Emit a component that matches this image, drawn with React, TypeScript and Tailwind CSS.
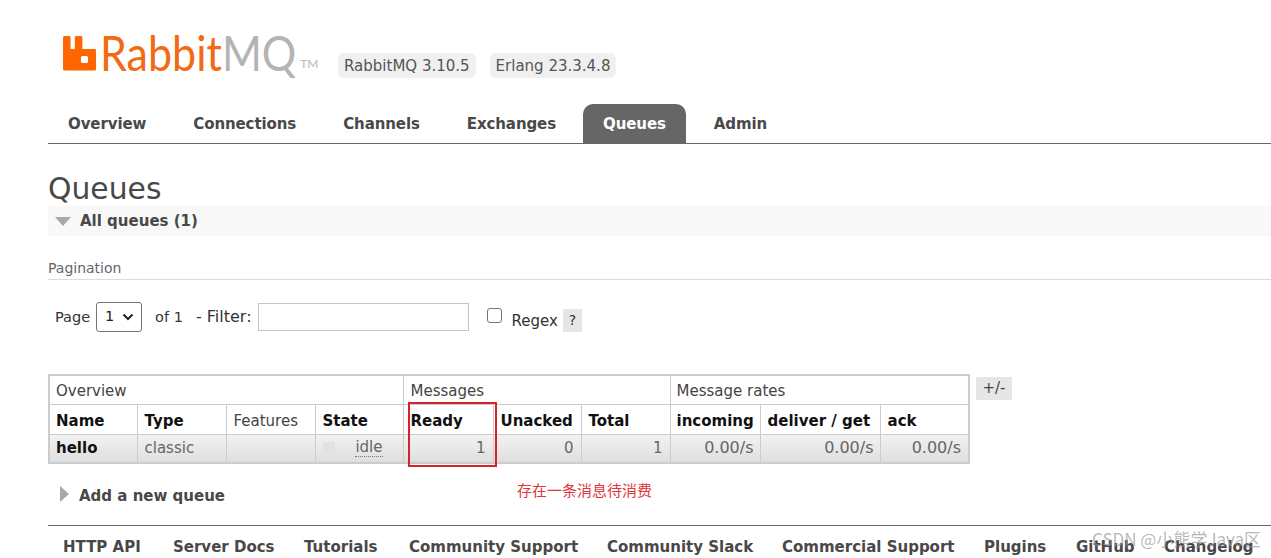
const font = "[font-family:'DejaVu_Sans',Verdana,sans-serif]";

const nav = ["Overview", "Connections", "Channels", "Exchanges", "Queues", "Admin"];
const footer: [string, string][] = [
  ["HTTP API", "w-[110px]"],
  ["Server Docs", "w-[131px]"],
  ["Tutorials", "w-[105px]"],
  ["Community Support", "w-[198px]"],
  ["Community Slack", "w-[175px]"],
  ["Commercial Support", "w-[202px]"],
  ["Plugins", "w-[92px]"],
  ["GitHub", "w-[88px]"],
  ["Changelog", "w-auto"],
];

const headCols: [string, string, boolean][] = [
  ["Name", "w-[88px]", true],
  ["Type", "w-[89px]", true],
  ["Features", "w-[89px]", false],
  ["State", "w-[88px]", true],
  ["Ready", "w-[90px]", true],
  ["Unacked", "w-[88px]", true],
  ["Total", "w-[89px]", true],
  ["incoming", "w-[90px]", true],
  ["deliver / get", "w-[120px]", true],
  ["ack", "w-[89px]", true],
];

const cell = "border border-[#ccc] px-[7px] py-0 align-middle whitespace-nowrap";
const rowBg = "bg-gradient-to-b from-[#f3f3f3] to-[#dedede]";

export default function App() {
  return (
    <div className={`${font} relative h-[558px] w-[1271px] overflow-hidden bg-white pl-12 text-[#484848]`}>
      {/* Header */}
      <div className="flex h-[104px] items-start">
        <div className="ml-[15px] mt-[35px] flex h-[36px] w-[275px] shrink-0 items-center">
          <svg width="34" height="35" viewBox="0 0 36 35" preserveAspectRatio="none" className="shrink-0">
            <path
              d="M1.5 0H6.5A1.5 1.5 0 0 1 8 1.5V13H12.5V1.5A1.5 1.5 0 0 1 14 0H19A1.5 1.5 0 0 1 20.5 1.5V13H33.5A1.5 1.5 0 0 1 35 14.5V33A1.5 1.5 0 0 1 33.5 34.5H1.5A1.5 1.5 0 0 1 0 33V1.5A1.5 1.5 0 0 1 1.5 0ZM20.5 20A1.5 1.5 0 0 0 19 21.5V25.5A1.5 1.5 0 0 0 20.5 27H25A1.5 1.5 0 0 0 26.5 25.5V21.5A1.5 1.5 0 0 0 25 20Z"
              fill="#ff6600"
              fillRule="evenodd"
            />
          </svg>
          <span className="ml-[3px] origin-[50%_70%] scale-y-[1.14] whitespace-nowrap font-['Lato',sans-serif] text-[43px] leading-none font-normal text-[#f26a13]">
            Rabbit<span className="text-[#b4b4b4]">MQ</span>
          </span>
          <span className="mt-[22px] ml-[4px] font-['Lato',sans-serif] text-[12px] leading-none text-[#b8b8b8]">TM</span>
        </div>
        <div className="mt-[53px] flex gap-[14px] text-[15px] leading-[24px] text-[#555]">
          <span className="rounded-[6px] bg-[#f0f0f0] px-[6px] pt-[1px]">RabbitMQ 3.10.5</span>
          <span className="rounded-[6px] bg-[#f0f0f0] px-[6px] pt-[1px]">Erlang 23.3.4.8</span>
        </div>
      </div>

      {/* Tabs */}
      <div className="flex h-[40px] items-stretch border-b border-[#666] pl-[20px] text-[15px] font-bold tracking-[-0.1px]">
        {nav.map((n) =>
          n === "Queues" ? (
            <span key={n} className="mr-[28px] -ml-[20px] flex items-center rounded-t-[10px] bg-[#666] px-[20px] pt-[2px] text-white">
              {n}
            </span>
          ) : (
            <span key={n} className="mr-[47px] flex items-center pt-[2px] text-[#484848]">
              {n}
            </span>
          )
        )}
      </div>

      {/* Title */}
      <h1 className="mt-[27px] h-[35px] text-[29.8px] leading-[36px] font-normal text-[#484848]">Queues</h1>
      <div className="flex h-[30px] w-full items-center bg-[#f8f8f8]">
        <svg width="16" height="9" viewBox="0 0 16 9" className="ml-[7px]">
          <path d="M0 0H16L8 9Z" fill="#a8a8a8" />
        </svg>
        <span className="ml-[9px] text-[15px] font-bold text-[#484848]">All queues (1)</span>
      </div>

      {/* Pagination */}
      <div className="mt-[22px] h-[22px] border-b border-[#dcdcdc] text-[14px] leading-[20px] text-[#666]">Pagination</div>
      <div className="mt-[22px] flex h-[30px] items-center pl-[7px] text-[14.5px] text-[#333]">
        <span className="translate-y-[1px]">Page</span>
        <div className="ml-[6px] flex h-[30px] w-[46px] items-center justify-between rounded-[3px] border border-[#767676] pr-[7px] pl-[8px] text-[#222]">
          <span>1</span>
          <svg width="12" height="8" viewBox="0 0 12 8">
            <path d="M1.5 1.5L6 6L10.5 1.5" fill="none" stroke="#222" strokeWidth="2" />
          </svg>
        </div>
        <span className="ml-[13px] translate-y-[1px]">of 1</span>
        <span className="ml-[13px] text-[16px]">- Filter:</span>
        <div className="ml-[6px] h-[28px] w-[211px] border border-[#c4c4c4] bg-white" />
        <div className="ml-[18px] -mt-[4px] h-[15px] w-[15px] rounded-[3px] border border-[#767676] bg-white" />
        <span className="ml-[10px] translate-y-[4px] text-[15px]">Regex</span>
        <span className="ml-[5px] flex h-[23px] w-[19px] translate-y-[3px] items-center justify-center bg-[#e6e6e6] text-[14px]">?</span>
      </div>

      {/* Table */}
      <div className="mt-[42px] flex items-start">
        <table className="w-[921px] table-fixed border-collapse border-2 border-[#ccc] text-[15px]">
          <colgroup>
            {headCols.map(([n, w]) => (
              <col key={n} className={w} />
            ))}
          </colgroup>
          <tbody>
            <tr className="h-[29px] text-[#444]">
              <td colSpan={4} className={`${cell} pt-[2px] pl-[6px]`}>Overview</td>
              <td colSpan={3} className={`${cell} pt-[2px]`}>Messages</td>
              <td colSpan={3} className={`${cell} pt-[2px] pl-[6px]`}>Message rates</td>
            </tr>
            <tr className="h-[30px]">
              {headCols.map(([n, , b], i) => (
                <td key={n} className={`${cell} pt-[4px] ${i === 0 || i === 7 ? "pl-[6px]" : ""} ${b ? "font-bold text-[#111]" : "text-[#444]"}`}>
                  {n}
                </td>
              ))}
            </tr>
            <tr className={`h-[29px] ${rowBg} text-[#666]`}>
              <td className={`${cell} pl-[6px] font-bold text-[#111]`}>hello</td>
              <td className={cell}>classic</td>
              <td className={cell}></td>
              <td className={cell}>
                <div className="flex items-center justify-between pr-[13px]">
                  <span className="h-[12px] w-[12px] rounded-[2px] bg-[#e2e2e2]" />
                  <span className="border-b border-dotted border-[#777] leading-[17px]">idle</span>
                </div>
              </td>
              <td className={`${cell} text-right`}>1</td>
              <td className={`${cell} text-right`}>0</td>
              <td className={`${cell} text-right`}>1</td>
              <td className={`${cell} pr-[6px] text-right text-[16px]`}>0.00/s</td>
              <td className={`${cell} pr-[6px] text-right text-[16px]`}>0.00/s</td>
              <td className={`${cell} pr-[7px] text-right text-[16px]`}>0.00/s</td>
            </tr>
          </tbody>
        </table>
        <span className="ml-[6px] mt-[3px] flex h-[23px] w-[36px] items-center justify-center bg-[#e6e6e6] text-[15px] text-[#444]">+/-</span>
      </div>

      {/* Add a new queue */}
      <div className="mt-[21px] flex h-[22px] items-center">
        <svg width="9" height="16" viewBox="0 0 9 16" className="ml-[12px] -mt-[4px]">
          <path d="M0 0L9 8L0 16Z" fill="#a8a8a8" />
        </svg>
        <span className="ml-[10px] text-[15px] font-bold text-[#484848]">Add a new queue</span>
      </div>

      {/* Footer */}
      <div className="mt-[18px] flex h-[33px] border-t border-[#666] pt-[10px] pl-[15px] text-[15px] font-bold whitespace-nowrap text-[#484848]">
        {footer.map(([n, w]) => (
          <span key={n} className={`shrink-0 ${w}`}>{n}</span>
        ))}
      </div>

      {/* Annotations */}
      <div className="absolute top-[402px] left-[408px] h-[65px] w-[89px] border-2 border-[#d3242c]" />
      <span className="absolute top-[481px] left-[517px] font-['Noto_Sans_CJK_SC',sans-serif] text-[15px] leading-[18px] whitespace-nowrap text-[#e0353c]">
        存在一条消息待消费
      </span>
      <span className="absolute top-[530px] left-[1092px] font-['Noto_Sans_CJK_SC',sans-serif] text-[17px] leading-[18px] whitespace-nowrap text-[#999]/70">
        CSDN @小熊学Java区
      </span>
    </div>
  );
}
